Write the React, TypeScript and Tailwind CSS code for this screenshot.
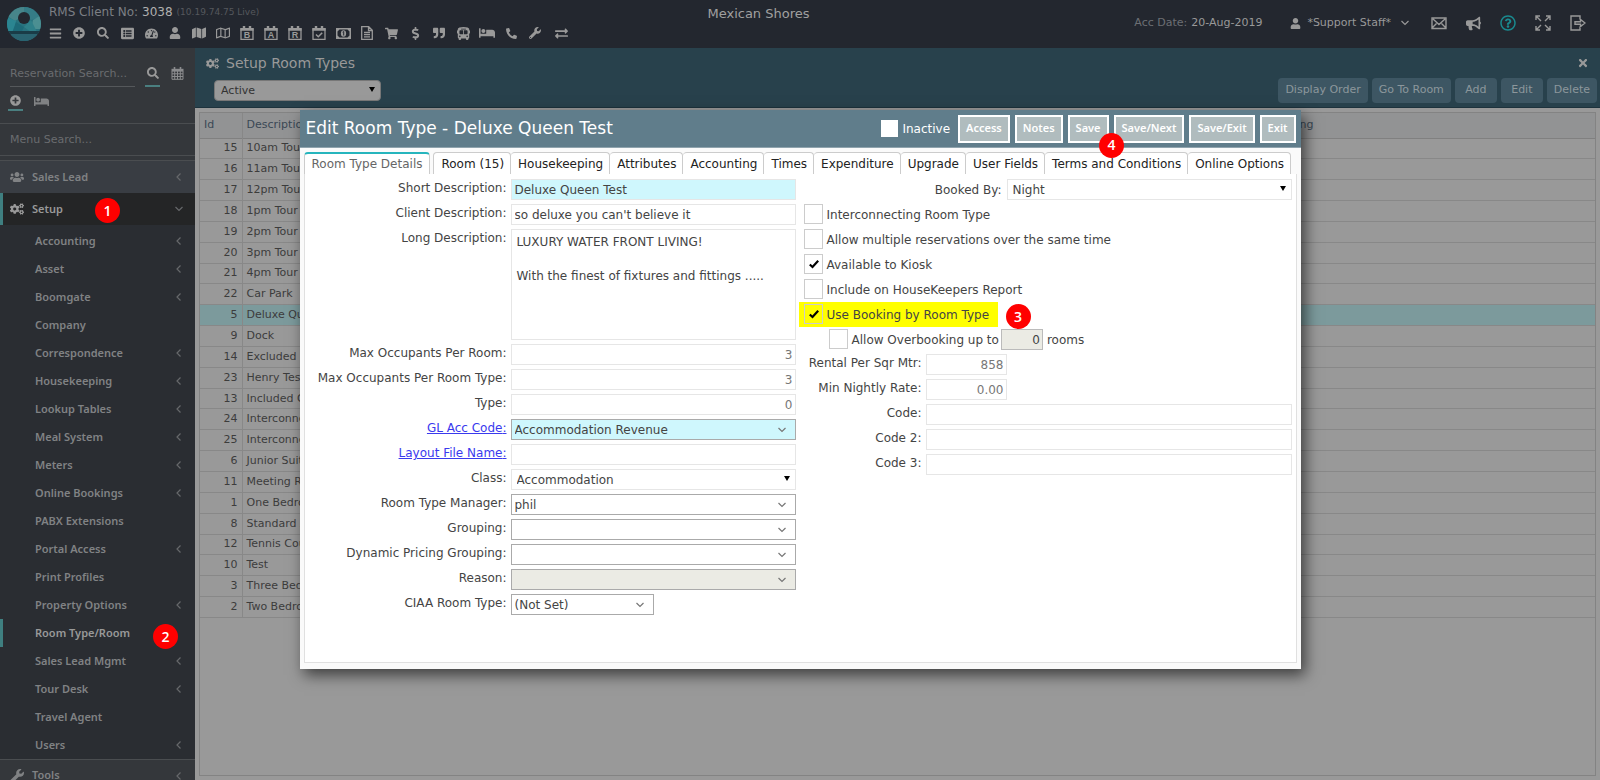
import React, { useState } from "react";
import clsx from "clsx";
import {
  FaBars, FaBed, FaBullhorn, FaBusAlt, FaCogs, FaDollarSign, FaExchangeAlt, FaListAlt,
  FaMap, FaPhoneAlt, FaPlusCircle, FaQuoteRight, FaRegMap, FaRegQuestionCircle,
  FaSearch, FaShoppingCart, FaTachometerAlt, FaTimes, FaUser, FaUsers, FaWrench,
} from "react-icons/fa";

const SUB_MENU = [
  { label: "Accounting", more: true },
  { label: "Asset", more: true },
  { label: "Boomgate", more: true },
  { label: "Company" },
  { label: "Correspondence", more: true },
  { label: "Housekeeping", more: true },
  { label: "Lookup Tables", more: true },
  { label: "Meal System", more: true },
  { label: "Meters", more: true },
  { label: "Online Bookings", more: true },
  { label: "PABX Extensions" },
  { label: "Portal Access", more: true },
  { label: "Print Profiles" },
  { label: "Property Options", more: true },
  { label: "Room Type/Room", active: true },
  { label: "Sales Lead Mgmt", more: true },
  { label: "Tour Desk", more: true },
  { label: "Travel Agent" },
  { label: "Users", more: true },
];

const ROOM_TYPES: [number, string][] = [
  [15, "10am Tour (Max 10)"],
  [16, "11am Tour (Max 10)"],
  [17, "12pm Tour (Max 10)"],
  [18, "1pm Tour (Max 10)"],
  [19, "2pm Tour (Max 10)"],
  [20, "3pm Tour (Max 10)"],
  [21, "4pm Tour (Max 10)"],
  [22, "Car Park"],
  [5, "Deluxe Queen Test"],
  [9, "Dock"],
  [14, "Excluded Category"],
  [23, "Henry Test"],
  [13, "Included Category"],
  [24, "Interconnecting 1"],
  [25, "Interconnecting 2"],
  [6, "Junior Suite"],
  [11, "Meeting Room"],
  [1, "One Bedroom"],
  [8, "Standard Apartment"],
  [12, "Tennis Court"],
  [10, "Test"],
  [3, "Three Bedroom"],
  [2, "Two Bedroom"],
];

const TABS = [
  "Room Type Details", "Room (15)", "Housekeeping", "Attributes", "Accounting", "Times",
  "Expenditure", "Upgrade", "User Fields", "Terms and Conditions", "Online Options",
];

function Logo() {
  return (
    <svg viewBox="0 0 34 34" className="mt-[7px] h-[34px] w-[34px]" aria-hidden="true">
      <defs>
        <clipPath id="logo-clip">
          <circle cx="17" cy="17" r="17" />
        </clipPath>
      </defs>
      <g clipPath="url(#logo-clip)">
        <rect width="34" height="34" fill="#28727e" />
        <path d="M0 0h17v8L8 14 0 9z" fill="#47858a" />
        <path d="M17 0h17v10l-10 3-7-6z" fill="#357c86" />
        <path d="M34 8v14H24l2-9z" fill="#4b8f92" />
        <path d="M0 10l9 4-2 10H0z" fill="#2b8591" />
        <path d="M9 15l8 5-3 6H5z" fill="#1d6a78" />
        <path d="M24 13l-7 7 7 5h6z" fill="#2f8089" />
        <path d="M4 27h26v7H4z" fill="#2a6370" />
        <rect y="24" width="34" height="3" fill="#1a3c47" />
        <circle cx="17" cy="11" r="6" fill="#23272f" />
      </g>
    </svg>
  );
}

function CalendarIcon({ letter }: { letter?: string }) {
  return (
    <svg viewBox="0 0 14 14" className="h-[14px] w-[14px]" aria-hidden="true">
      <path d="M1 3h12v10.300H1z" fill="none" stroke="currentColor" strokeWidth="1.300" />
      <path d="M0.400 2h13.200v2.800H0.400zM2.800 0h2.400v3H2.800zM8.800 0h2.400v3H8.800z" fill="currentColor" />
      {letter ? (
        <text x="7" y="12.300" textAnchor="middle" fontSize="9" fontWeight="700" fontFamily="Liberation Sans, sans-serif" fill="currentColor">
          {letter}
        </text>
      ) : (
        <path d="M4 8.500L6.300 10.800 10.200 6.700" fill="none" stroke="currentColor" strokeWidth="1.500" />
      )}
    </svg>
  );
}

function CalendarGrid() {
  return (
    <svg viewBox="0 0 13 13" className="h-[13px] w-[13px]" fill="none" stroke="currentColor" aria-hidden="true">
      <path d="M1 4h11v8.300H1zM3.700 4v8.300M6.500 4v8.300M9.300 4v8.300M1 6.800h11M1 9.500h11" />
      <path d="M0.500 3h12" strokeWidth="2.400" />
      <path d="M3.500 0v3M9.500 0v3" strokeWidth="1.600" />
    </svg>
  );
}

function MoneyIcon() {
  return (
    <svg viewBox="0 0 15 11" className="h-[11px] w-[15px]" aria-hidden="true">
      <path d="M0 0h15v11H0zM3.500 1.500L1.500 3.500v4l2 2h8l2-2v-4l-2-2z" fill="currentColor" fillRule="evenodd" />
      <ellipse cx="7.500" cy="5.500" rx="2.600" ry="3.300" fill="currentColor" />
      <path d="M6.700 4.200l1-0.700V7.500" fill="none" stroke="#23272f" />
    </svg>
  );
}

function FileIcon() {
  return (
    <svg viewBox="0 0 12 14" className="h-[14px] w-3" fill="none" stroke="currentColor" strokeWidth="1.300" aria-hidden="true">
      <path d="M0.700 0.700h7l3.600 3.600v9H0.700zM7.500 0.700v3.800h3.800M3 6.500h6M3 8.700h6M3 10.900h6" />
    </svg>
  );
}

function EnvelopeIcon() {
  return (
    <svg viewBox="0 0 16 16" className="h-4 w-4" fill="none" stroke="currentColor" strokeWidth="1.400" aria-hidden="true">
      <path d="M1 3h14v10.500H1zM2 4l6 5.500L14 4M1.500 12.500l4-4M14.500 12.500l-4-4" />
    </svg>
  );
}

function ExpandIcon() {
  return (
    <svg viewBox="0 0 16 16" className="h-4 w-4" fill="none" stroke="currentColor" strokeWidth="1.400" aria-hidden="true">
      <path d="M1 5V1h4M11 1h4v4M15 11v4h-4M5 15H1v-4M1.500 1.500l4.500 4.500M14.500 1.500L10 6M14.500 14.500L10 10M1.500 14.500L6 10" />
    </svg>
  );
}

function ExitIcon() {
  return (
    <svg viewBox="0 0 16 16" className="h-4 w-4" fill="none" stroke="currentColor" strokeWidth="1.400" aria-hidden="true">
      <path d="M10 4.500V1H1v14h9v-3.500M5 6.700h5.500V4.500L15 8l-4.500 3.500V9.300H5z" />
    </svg>
  );
}

function Chevron({ dir, className }: { dir: "left" | "down"; className?: string }) {
  return (
    <svg viewBox="0 0 8 8" className={clsx("h-2 w-2", className)} fill="none" stroke="currentColor" strokeWidth="1.200" aria-hidden="true">
      {dir === "left" ? <path d="M5.500 0.500L2 4l3.500 3.500" /> : <path d="M0.500 2L4 5.500 7.500 2" />}
    </svg>
  );
}

function Marker({ n, className }: { n: number; className: string }) {
  return (
    <span className={clsx("absolute z-20 flex h-[25px] w-[25px] items-center justify-center rounded-full bg-[#ff0000] font-['Open_Sans',sans-serif] text-sm font-semibold text-white", className)}>
      {n}
    </span>
  );
}

const TOOLBAR = [
  { name: "Menu", icon: <FaBars /> },
  { name: "New", icon: <FaPlusCircle className="text-xs" /> },
  { name: "Search", icon: <FaSearch className="text-xs" /> },
  { name: "List", icon: <FaListAlt /> },
  { name: "Dashboard", icon: <FaTachometerAlt /> },
  { name: "Guest", icon: <FaUser className="text-xs" /> },
  { name: "Map", icon: <FaMap className="text-sm" /> },
  { name: "Area map", icon: <FaRegMap className="text-sm" /> },
  { name: "Booking chart", icon: <CalendarIcon letter="B" /> },
  { name: "Availability chart", icon: <CalendarIcon letter="A" /> },
  { name: "Rates chart", icon: <CalendarIcon letter="R" /> },
  { name: "Tasks", icon: <CalendarIcon /> },
  { name: "Cash", icon: <MoneyIcon /> },
  { name: "Report", icon: <FileIcon /> },
  { name: "Point of sale", icon: <FaShoppingCart /> },
  { name: "Accounts", icon: <FaDollarSign /> },
  { name: "Quotes", icon: <FaQuoteRight className="text-xs" /> },
  { name: "Transport", icon: <FaBusAlt /> },
  { name: "Rooms", icon: <FaBed className="text-base" /> },
  { name: "Phone", icon: <FaPhoneAlt className="rotate-90 -scale-x-100 text-[11px]" /> },
  { name: "Utilities", icon: <FaWrench className="text-xs" /> },
];

function TopBar() {
  return (
    <header className="flex h-12 shrink-0 bg-[#23272f] pl-[7px] pr-[14px] text-[#999]">
      <div className="flex flex-1 gap-2">
        <Logo />
        <div className="flex flex-col pt-1">
          <p className="flex h-4 items-center gap-1 text-xs text-[#7c7f84]">
            RMS Client No: <span className="text-[#b0b0b0]">3038</span>
            <span className="text-[9px] text-[#55585d]">(10.19.74.75 Live)</span>
          </p>
          <nav className="-ml-1.5 flex h-[26px] items-center text-[13px]">
            {TOOLBAR.map((t) => (
              <button key={t.name} aria-label={t.name} className="flex w-6 items-center justify-center">
                {t.icon}
              </button>
            ))}
            <button aria-label="Swap" className="ml-0.5 flex w-6 items-center justify-center">
              <FaExchangeAlt />
            </button>
          </nav>
        </div>
      </div>
      <h1 className="mr-[76px] pt-1 text-[13px] leading-5 text-[#a0a0a0]">Mexican Shores</h1>
      <div className="flex flex-1 items-center justify-end pb-0.5">
        <p className="mr-7 flex gap-1 whitespace-nowrap text-[11px] text-[#6c6f74]">
          Acc Date: <span className="text-[#999]">20-Aug-2019</span>
        </p>
        <button className="mr-[22px] flex items-center gap-1.5 whitespace-nowrap text-[11px]">
          <FaUser /> *Support Staff* <Chevron dir="down" className="ml-1" />
        </button>
        <div className="flex items-center gap-[19px] text-[15px]">
          <button aria-label="Messages"><EnvelopeIcon /></button>
          <button aria-label="News"><FaBullhorn /></button>
          <button aria-label="Help" className="text-[#1a8a8f]"><FaRegQuestionCircle className="text-base" /></button>
          <button aria-label="Full screen"><ExpandIcon /></button>
          <button aria-label="Sign out"><ExitIcon /></button>
        </div>
      </div>
    </header>
  );
}

function Sidebar() {
  return (
    <aside className="flex w-[195px] shrink-0 flex-col overflow-hidden bg-[#34373b] font-['Noto_Sans',sans-serif] text-[11px] font-semibold text-[#808284]">
      <div className="h-[75px] shrink-0 px-2 pt-3">
        <div className="flex items-center">
          <input
            aria-label="Reservation search"
            placeholder="Reservation Search..."
            className="mx-0.5 h-[26px] w-[125px] border-b border-[#55585b] bg-transparent font-['DejaVu_Sans',sans-serif] text-[11px] font-normal placeholder:text-[#6a6c6f]"
          />
          <button aria-label="Search" className="ml-2 flex h-[27px] w-[15px] items-center justify-center border-b-2 border-[#4a7f80] text-xs text-[#999]">
            <FaSearch />
          </button>
          <button aria-label="Calendar" className="ml-[11px] text-[#8a8b8d]"><CalendarGrid /></button>
        </div>
        <div className="mt-1 flex items-center">
          <button aria-label="Add reservation" className="flex h-5 w-[15px] items-center justify-center border-b-2 border-[#4a7f80] text-[11px] text-[#999]">
            <FaPlusCircle />
          </button>
          <button aria-label="Rooms" className="ml-[11px] text-[15px]"><FaBed /></button>
        </div>
      </div>
      <div className="shrink-0 border-y border-[#4a4d50] pb-px">
        <input
          aria-label="Menu search"
          placeholder="Menu Search..."
          className="h-[30px] w-full bg-transparent px-2.5 font-['DejaVu_Sans',sans-serif] text-[11px] font-normal placeholder:text-[#6a6c6f]"
        />
      </div>
      <nav className="mt-1 border-t border-[#4a4d50]">
        <a href="#sales-lead" className="flex h-8 items-center bg-[#393d43] pl-2.5 pr-3">
          <FaUsers className="mr-2 text-sm" /> Sales Lead <Chevron dir="left" className="ml-auto text-[#66686b]" />
        </a>
        <a href="#setup" className="relative flex h-8 items-center border-l-[3px] border-[#3f7f80] bg-[#242526] pl-[7px] pr-3 text-[#999]">
          <FaCogs className="mr-2 text-sm" /> Setup <Chevron dir="down" className="ml-auto text-[#66686b]" />
          <Marker n={1} className="left-[92px] top-[5px]" />
        </a>
        <div className="bg-[#2a2d32] pt-0.5">
          {SUB_MENU.map((item) => (
            <a
              key={item.label}
              href="#menu"
              className={clsx(
                "relative flex h-7 items-center border-l-[3px] pl-8 pr-3",
                item.active ? "border-[#3f7f80] text-[#999]" : "border-transparent",
              )}
            >
              {item.label}
              {item.more && <Chevron dir="left" className="ml-auto text-[#66686b]" />}
              {item.active && <Marker n={2} className="left-[150px] top-[5px]" />}
            </a>
          ))}
        </div>
        <a href="#tools" className="flex h-8 items-center border-t border-[#4a4d50] pl-2.5 pr-3">
          <FaWrench className="mr-2 text-sm" /> Tools <Chevron dir="left" className="ml-auto text-[#66686b]" />
        </a>
      </nav>
    </aside>
  );
}

function RoomTypeList() {
  return (
    <main className="flex min-w-0 flex-1 flex-col bg-[#999]">
      <div className="h-[60px] shrink-0 border-b border-[#1d323c] bg-[#28414c] pl-[11px] pr-[3px]">
        <div className="flex h-[30px] items-center text-[#999]">
          <FaCogs className="mr-[7px] text-[13px]" />
          <h2 className="text-sm">Setup Room Types</h2>
          <button aria-label="Close" className="ml-auto mr-2 text-xs"><FaTimes /></button>
        </div>
        <div className="flex items-center justify-between pl-2">
          <SelectBox label="Status" value="Active" className="w-[167px] rounded-sm border-[#777] bg-[#999] pl-1.5 text-[11px] text-[#333]" />
          <div className="flex gap-1">
            {["Display Order", "Go To Room", "Add", "Edit", "Delete"].map((b) => (
              <button key={b} className="h-[25px] min-w-[42px] rounded-sm bg-[#3d5663] px-[7px] text-[11px] text-[#8c979c]">
                {b}
              </button>
            ))}
          </div>
        </div>
      </div>
      <div className="mx-1 mb-1 mt-1 flex-1 overflow-hidden border border-[#838383]">
        <table className="h-[505px] w-full border-collapse text-[11px] leading-4 text-[#3c3c3c]">
          <thead>
            <tr className="h-[25px] border-b border-[#808080] bg-[#929394] text-[#3a4855]">
              <th className="w-[42px] border-r border-[#878787] pl-1 text-left font-normal">Id</th>
              <th className="pl-1 text-left font-normal">Description</th>
              <th className="w-[332px] text-left font-normal">Grouping</th>
            </tr>
          </thead>
          <tbody>
            {ROOM_TYPES.map(([id, name]) => (
              <tr key={id} className={clsx("h-5 border-b border-[#888]", id === 5 && "bg-[#7c9a9c]")}>
                <td className="border-r border-[#888] pr-1 text-right">{id}</td>
                <td className="pl-1">{name}</td>
                <td />
              </tr>
            ))}
          </tbody>
        </table>
      </div>
    </main>
  );
}

// native select with its own arrow, either a solid triangle or a thin chevron
function SelectBox({ id, label, value, chevron, disabled, className }: {
  id?: string;
  label?: string;
  value: string;
  chevron?: boolean;
  disabled?: boolean;
  className?: string;
}) {
  return (
    <div className={clsx("relative h-[21px] border", className)}>
      <select id={id} aria-label={label} disabled={disabled} defaultValue={value} className="h-full w-full appearance-none bg-transparent pr-6 leading-4 opacity-100">
        <option>{value}</option>
      </select>
      {chevron ? (
        <Chevron dir="down" className="pointer-events-none absolute right-[9px] top-1.5 text-[#777]" />
      ) : (
        <span className="pointer-events-none absolute right-[5px] top-1.5 h-0 w-0 border-x-[3px] border-t-[5px] border-x-transparent border-t-black" />
      )}
    </div>
  );
}

function Row({ id, label, link, children }: { id: string; label: string; link?: boolean; children: React.ReactNode }) {
  return (
    <div className="flex items-start">
      <label htmlFor={id} className="w-[204px] shrink-0 pr-1 text-right leading-[19px]">
        {link ? <a href="#lookup" className="text-[#3a3aee] underline">{label}:</a> : `${label}:`}
      </label>
      {children}
    </div>
  );
}

function SmallRow({ id, label, children }: { id: string; label: string; children: React.ReactNode }) {
  return (
    <div className="flex items-start">
      <label htmlFor={id} className="w-[122px] shrink-0 pr-1 text-right leading-[19px]">{label}:</label>
      {children}
    </div>
  );
}

function Check({ label, checked }: { label: string; checked?: boolean }) {
  return (
    <label className="flex h-[21px] items-center gap-1">
      <span className="relative flex h-5 w-[19px] self-start">
        <input type="checkbox" defaultChecked={checked} className="peer h-full w-full appearance-none border border-[#ccc]" />
        <svg viewBox="0 0 10 10" className="pointer-events-none absolute left-[5px] top-[5px] hidden h-2.5 w-2.5 peer-checked:block" aria-hidden="true">
          <path d="M0.800 5.500L3.500 8 9.200 1.800" fill="none" stroke="#000" strokeWidth="2.200" />
        </svg>
      </span>
      {label}
    </label>
  );
}

const inputCls = "h-[21px] min-w-0 border border-[#e6e6e6] px-[3px]";
const numberCls = "h-[21px] min-w-0 border border-[#e6e6e6] px-0.5 text-right text-[#777]";

function EditDialog() {
  const [tab, setTab] = useState(TABS[0]);

  return (
    <div role="dialog" aria-label="Edit Room Type" className="pointer-events-auto w-[1001px] max-w-full bg-[#fafafa] text-xs text-[#444] shadow-[4px_6px_14px_rgba(0,0,0,0.6)]">
      <div className="flex h-[38px] items-center border-b border-[#90a4ae] bg-[#607d8b] pl-1.5 pr-[5px] text-white">
        <h2 className="text-[17px]">Edit Room Type - Deluxe Queen Test</h2>
        <label className="ml-auto mr-2 flex items-center gap-1">
          <input type="checkbox" className="h-[17px] w-[17px] appearance-none bg-white" />
          Inactive
        </label>
        <div className="relative flex gap-[5px]">
          {["Access", "Notes", "Save", "Save/Next", "Save/Exit", "Exit"].map((b) => (
            <button key={b} className="h-7 border-2 border-white bg-[#b0bcbe] px-1.5 font-['Noto_Sans',sans-serif] text-[11px] font-semibold">
              {b}
            </button>
          ))}
          <Marker n={4} className="left-[141px] top-[18px]" />
        </div>
      </div>

      <div className="px-1 pb-1.5 pt-1">
        <div role="tablist" className="flex h-[22px] items-stretch text-[#222]">
          {TABS.map((t, i) => (
            <button
              key={t}
              role="tab"
              aria-selected={t === tab}
              onClick={() => setTab(t)}
              className={clsx(
                "whitespace-nowrap rounded-t-sm bg-white",
                t === tab
                  ? "mr-[3px] border-x border-t-2 border-[#ccc] border-t-[#26b5bd] px-[7px] text-[#666]"
                  : "border-r border-t border-[#ccc] pl-[7px] pr-1.5",
                i === 1 && "border-l",
              )}
            >
              {t}
            </button>
          ))}
        </div>

        <div className="flex h-[489px] gap-2 border-x border-b border-[#e0e0e0] bg-white pl-0.5 pr-1 pt-[5px]">
          <form className="flex w-[489px] shrink-0 flex-col gap-1">
            <Row id="short" label="Short Description">
              <input id="short" defaultValue="Deluxe Queen Test" className={clsx(inputCls, "flex-1 bg-[#cff7fd]")} />
            </Row>
            <Row id="client" label="Client Description">
              <input id="client" defaultValue="so deluxe you can't believe it" className={clsx(inputCls, "flex-1")} />
            </Row>
            <Row id="long" label="Long Description">
              <textarea
                id="long"
                defaultValue={"LUXURY WATER FRONT LIVING!\n\nWith the finest of fixtures and fittings ....."}
                className="h-[111px] flex-1 resize-none border border-[#e6e6e6] px-[5px] py-1 leading-[17px]"
              />
            </Row>
            <Row id="occRoom" label="Max Occupants Per Room">
              <input id="occRoom" defaultValue="3" className={clsx(numberCls, "flex-1")} />
            </Row>
            <Row id="occType" label="Max Occupants Per Room Type">
              <input id="occType" defaultValue="3" className={clsx(numberCls, "flex-1")} />
            </Row>
            <Row id="type" label="Type">
              <input id="type" defaultValue="0" className={clsx(numberCls, "flex-1")} />
            </Row>
            <Row id="gl" label="GL Acc Code" link>
              <SelectBox id="gl" value="Accommodation Revenue" chevron className="flex-1 border-[#aaa] bg-[#cff7fd] pl-[3px]" />
            </Row>
            <Row id="layout" label="Layout File Name" link>
              <input id="layout" className={clsx(inputCls, "flex-1")} />
            </Row>
            <Row id="class" label="Class">
              <SelectBox id="class" value="Accommodation" className="flex-1 border-[#e6e6e6] pl-[5px]" />
            </Row>
            <Row id="manager" label="Room Type Manager">
              <SelectBox id="manager" value="phil" chevron className="flex-1 border-[#aaa] pl-[3px]" />
            </Row>
            <Row id="grouping" label="Grouping">
              <SelectBox id="grouping" value="" chevron className="flex-1 border-[#aaa] pl-[3px]" />
            </Row>
            <Row id="pricing" label="Dynamic Pricing Grouping">
              <SelectBox id="pricing" value="" chevron className="flex-1 border-[#aaa] pl-[3px]" />
            </Row>
            <Row id="reason" label="Reason">
              <SelectBox id="reason" value="" chevron disabled className="flex-1 border-[#aaa] bg-[#ebebe4] pl-[3px]" />
            </Row>
            <Row id="ciaa" label="CIAA Room Type">
              <SelectBox id="ciaa" value="(Not Set)" chevron className="w-[143px] border-[#aaa] pl-[3px]" />
            </Row>
          </form>

          <form className="flex min-w-0 flex-1 flex-col gap-1">
            <div className="flex items-center justify-end gap-[5px]">
              <label htmlFor="bookedBy">Booked By:</label>
              <SelectBox id="bookedBy" value="Night" className="w-[285px] border-[#e6e6e6] pl-[5px]" />
            </div>
            <Check label="Interconnecting Room Type" />
            <Check label="Allow multiple reservations over the same time" />
            <Check label="Available to Kiosk" checked />
            <Check label="Include on HouseKeepers Report" />
            <div className="relative -my-0.5 -ml-[5px] w-[199px] bg-[#ffff00] py-0.5 pl-[5px]">
              <Check label="Use Booking by Room Type" checked />
              <Marker n={3} className="left-[207px] top-0.5" />
            </div>
            <div className="flex h-[21px] items-center gap-0.5 pl-[25px]">
              <Check label="Allow Overbooking up to" />
              <input aria-label="Overbooking rooms" defaultValue="0" disabled className="mr-0.5 h-[21px] w-[42px] border border-[#bbb] bg-[#ebebe4] px-0.5 text-right" />
              rooms
            </div>
            <SmallRow id="rental" label="Rental Per Sqr Mtr">
              <input id="rental" defaultValue="858" className={clsx(numberCls, "w-[81px]")} />
            </SmallRow>
            <SmallRow id="minRate" label="Min Nightly Rate">
              <input id="minRate" defaultValue="0.00" className={clsx(numberCls, "w-[81px]")} />
            </SmallRow>
            <SmallRow id="code1" label="Code">
              <input id="code1" className={clsx(inputCls, "flex-1")} />
            </SmallRow>
            <SmallRow id="code2" label="Code 2">
              <input id="code2" className={clsx(inputCls, "flex-1")} />
            </SmallRow>
            <SmallRow id="code3" label="Code 3">
              <input id="code3" className={clsx(inputCls, "flex-1")} />
            </SmallRow>
          </form>
        </div>
      </div>
    </div>
  );
}

export default function App() {
  return (
    <div className="relative flex h-screen flex-col overflow-hidden font-['DejaVu_Sans',sans-serif]">
      <TopBar />
      <div className="flex min-h-0 flex-1">
        <Sidebar />
        <RoomTypeList />
      </div>
      <div className="pointer-events-none absolute inset-0 flex items-start justify-center pt-[110px]">
        <EditDialog />
      </div>
    </div>
  );
}
